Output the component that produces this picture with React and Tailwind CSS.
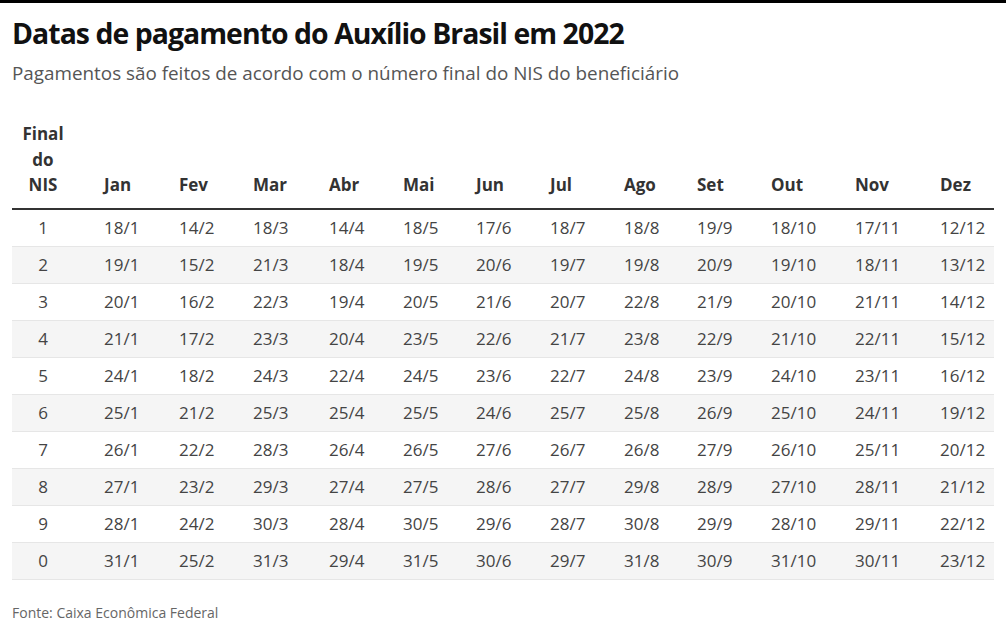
const MONTHS = ['Jan', 'Fev', 'Mar', 'Abr', 'Mai', 'Jun', 'Jul', 'Ago', 'Set', 'Out', 'Nov', 'Dez'];

const ROWS = [
  ['1', '18/1', '14/2', '18/3', '14/4', '18/5', '17/6', '18/7', '18/8', '19/9', '18/10', '17/11', '12/12'],
  ['2', '19/1', '15/2', '21/3', '18/4', '19/5', '20/6', '19/7', '19/8', '20/9', '19/10', '18/11', '13/12'],
  ['3', '20/1', '16/2', '22/3', '19/4', '20/5', '21/6', '20/7', '22/8', '21/9', '20/10', '21/11', '14/12'],
  ['4', '21/1', '17/2', '23/3', '20/4', '23/5', '22/6', '21/7', '23/8', '22/9', '21/10', '22/11', '15/12'],
  ['5', '24/1', '18/2', '24/3', '22/4', '24/5', '23/6', '22/7', '24/8', '23/9', '24/10', '23/11', '16/12'],
  ['6', '25/1', '21/2', '25/3', '25/4', '25/5', '24/6', '25/7', '25/8', '26/9', '25/10', '24/11', '19/12'],
  ['7', '26/1', '22/2', '28/3', '26/4', '26/5', '27/6', '26/7', '26/8', '27/9', '26/10', '25/11', '20/12'],
  ['8', '27/1', '23/2', '29/3', '27/4', '27/5', '28/6', '27/7', '29/8', '28/9', '27/10', '28/11', '21/12'],
  ['9', '28/1', '24/2', '30/3', '28/4', '30/5', '29/6', '28/7', '30/8', '29/9', '28/10', '29/11', '22/12'],
  ['0', '31/1', '25/2', '31/3', '29/4', '31/5', '30/6', '29/7', '31/8', '30/9', '31/10', '30/11', '23/12'],
];

const GRID = 'grid grid-cols-[92px_75px_74px_76px_74px_73px_74px_74px_73px_74px_84px_85px_1fr]';

export default function App() {
  return (
    <div className="min-h-[635px] w-[1006px] bg-white font-['Open_Sans',sans-serif] text-[#333]">
      {/* top bar */}
      <div className="h-[3px] bg-black" />

      <div className="px-3">
        {/* Header */}
        <h1 className="mt-[13px] text-[28.4px] font-bold leading-[34px] tracking-[-0.95px] text-[#111]">
          Datas de pagamento do Auxílio Brasil em 2022
        </h1>
        <p className="mt-[10px] text-[18.85px] leading-[26px] text-[#555]">
          Pagamentos são feitos de acordo com o número final do NIS do beneficiário
        </p>

        {/* Table */}
        <div className="mt-[35px] w-[982px] text-[17px]">
          <div className={`${GRID} items-end border-b-2 border-[#333] pb-[10px] font-bold leading-[25.5px]`}>
            <div className="w-[62px] text-center">
              Final
              <br />
              do
              <br />
              NIS
            </div>
            {MONTHS.map((m) => (
              <div key={m}>{m}</div>
            ))}
          </div>

          {ROWS.map((row, i) => (
            <div
              key={row[0]}
              className={`${GRID} h-[37px] items-center border-b border-[#e6e6e6] text-[#444] ${i % 2 === 1 ? 'bg-[#f5f5f5]' : 'bg-white'}`}
            >
              <div className="w-[62px] text-center">{row[0]}</div>
              {row.slice(1).map((v, j) => (
                <div key={j}>{v}</div>
              ))}
            </div>
          ))}
        </div>

        {/* Source */}
        <p className="mt-[22px] text-[14px] text-[#666]">Fonte: Caixa Econômica Federal</p>
      </div>
    </div>
  );
}
